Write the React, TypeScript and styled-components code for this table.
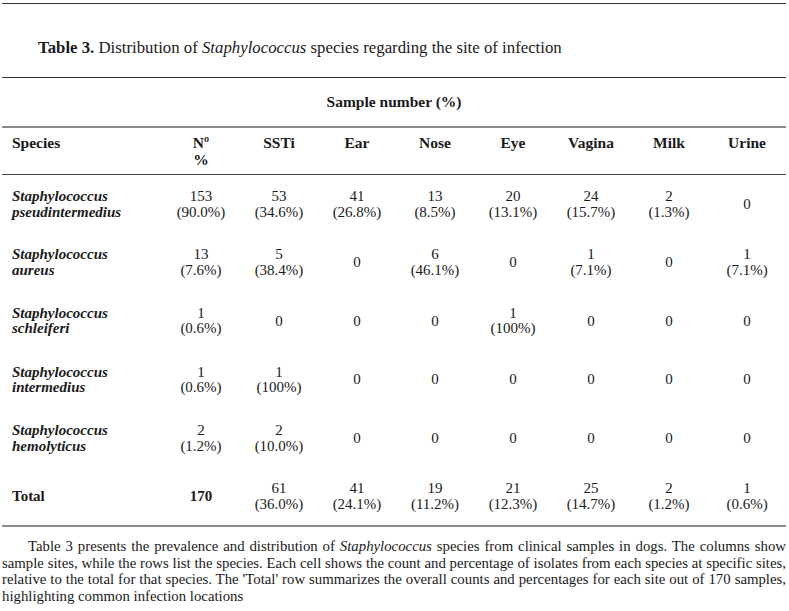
import React from "react";
import styled, { createGlobalStyle } from "styled-components";

const Global = createGlobalStyle`
  html, body { margin: 0; padding: 0; background: #fff; }
  body { font-family: "Liberation Serif", "Times New Roman", serif; color: #1a1a1a; }
`;

const Page = styled.div`
  width: 784px;
  margin: 3px 0 0 2px;
`;

const TitleBlock = styled.div`
  border-top: 1px solid #333;
  padding: 34px 0 0 36px;
  height: 39px;
  font-size: 16.8px;
  line-height: 19px;
`;

const Table = styled.table`
  width: 784px;
  table-layout: fixed;
  border-collapse: collapse;
  font-size: 15px;
`;

const GroupRow = styled.tr`
  border-top: 1px solid #333;
  border-bottom: 2px solid #8c8c8c;
`;

const GroupCell = styled.th`
  height: 48px;
  padding: 0;
  text-align: center;
  vertical-align: middle;
  font-weight: bold;
  font-size: 15.5px;
`;

const HeadRow = styled.tr`
  border-bottom: 1px solid #444;
`;

const HeadCell = styled.th<{ $left?: boolean }>`
  padding: 6px ${(p) => (p.$left ? "0 0 10px" : "0")};
  height: 34px;
  vertical-align: top;
  text-align: ${(p) => (p.$left ? "left" : "center")};
  font-weight: bold;
  font-size: 15.5px;
  line-height: 17px;
`;

const BodyRow = styled.tr<{ $last?: boolean }>`
  height: 58.6px;
  border-bottom: ${(p) => (p.$last ? "2px solid #8c8c8c" : "none")};
`;

const Cell = styled.td`
  padding: 1px 0 0;
  text-align: center;
  vertical-align: middle;
  line-height: 15.5px;
`;

const SpeciesCell = styled.td<{ $italic?: boolean }>`
  padding: 1px 0 0 10px;
  text-align: left;
  vertical-align: middle;
  font-weight: bold;
  font-style: ${(p) => (p.$italic ? "italic" : "normal")};
  line-height: 15.5px;
`;

const BoldCell = styled(Cell)`
  font-weight: bold;
`;

const Caption = styled.p`
  margin: 11px 0 0;
  font-size: 14.8px;
  line-height: 16.6px;
  text-indent: 26px;
  text-align: justify;
`;

type Val = [string, string?];

const rows: { genus: string; species: string; values: Val[] }[] = [
  {
    genus: "Staphylococcus",
    species: "pseudintermedius",
    values: [
      ["153", "(90.0%)"],
      ["53", "(34.6%)"],
      ["41", "(26.8%)"],
      ["13", "(8.5%)"],
      ["20", "(13.1%)"],
      ["24", "(15.7%)"],
      ["2", "(1.3%)"],
      ["0"],
    ],
  },
  {
    genus: "Staphylococcus",
    species: "aureus",
    values: [
      ["13", "(7.6%)"],
      ["5", "(38.4%)"],
      ["0"],
      ["6", "(46.1%)"],
      ["0"],
      ["1", "(7.1%)"],
      ["0"],
      ["1", "(7.1%)"],
    ],
  },
  {
    genus: "Staphylococcus",
    species: "schleiferi",
    values: [["1", "(0.6%)"], ["0"], ["0"], ["0"], ["1", "(100%)"], ["0"], ["0"], ["0"]],
  },
  {
    genus: "Staphylococcus",
    species: "intermedius",
    values: [["1", "(0.6%)"], ["1", "(100%)"], ["0"], ["0"], ["0"], ["0"], ["0"], ["0"]],
  },
  {
    genus: "Staphylococcus",
    species: "hemolyticus",
    values: [["2", "(1.2%)"], ["2", "(10.0%)"], ["0"], ["0"], ["0"], ["0"], ["0"], ["0"]],
  },
];

const totals: Val[] = [
  ["61", "(36.0%)"],
  ["41", "(24.1%)"],
  ["19", "(11.2%)"],
  ["21", "(12.3%)"],
  ["25", "(14.7%)"],
  ["2", "(1.2%)"],
  ["1", "(0.6%)"],
];

const heads = ["SSTi", "Ear", "Nose", "Eye", "Vagina", "Milk", "Urine"];

const ValueCell = ({ v }: { v: Val }) => (
  <Cell>
    {v[0]}
    {v[1] && (
      <>
        <br />
        {v[1]}
      </>
    )}
  </Cell>
);

export default function App() {
  return (
    <Page>
      <Global />
      <TitleBlock>
        <b>Table 3.</b> Distribution of <i>Staphylococcus</i> species regarding the site of infection
      </TitleBlock>
      <Table>
        <colgroup>
          <col style={{ width: 160 }} />
          {Array.from({ length: 8 }).map((_, i) => (
            <col key={i} style={{ width: 78 }} />
          ))}
        </colgroup>
        <thead>
          <GroupRow>
            <GroupCell colSpan={9}>Sample number (%)</GroupCell>
          </GroupRow>
          <HeadRow>
            <HeadCell $left>Species</HeadCell>
            <HeadCell>
              Nº
              <br />%
            </HeadCell>
            {heads.map((h) => (
              <HeadCell key={h}>{h}</HeadCell>
            ))}
          </HeadRow>
        </thead>
        <tbody>
          {rows.map((r) => (
            <BodyRow key={r.species}>
              <SpeciesCell $italic>
                {r.genus}
                <br />
                {r.species}
              </SpeciesCell>
              {r.values.map((v, i) => (
                <ValueCell key={i} v={v} />
              ))}
            </BodyRow>
          ))}
          <BodyRow $last>
            <SpeciesCell>Total</SpeciesCell>
            <BoldCell>170</BoldCell>
            {totals.map((v, i) => (
              <ValueCell key={i} v={v} />
            ))}
          </BodyRow>
        </tbody>
      </Table>
      <Caption>
        Table 3 presents the prevalence and distribution of <i>Staphylococcus</i> species from clinical
        samples in dogs. The columns show sample sites, while the rows list the species. Each cell shows
        the count and percentage of isolates from each species at specific sites, relative to the total
        for that species. The 'Total' row summarizes the overall counts and percentages for each site out
        of 170 samples, highlighting common infection locations
      </Caption>
    </Page>
  );
}
